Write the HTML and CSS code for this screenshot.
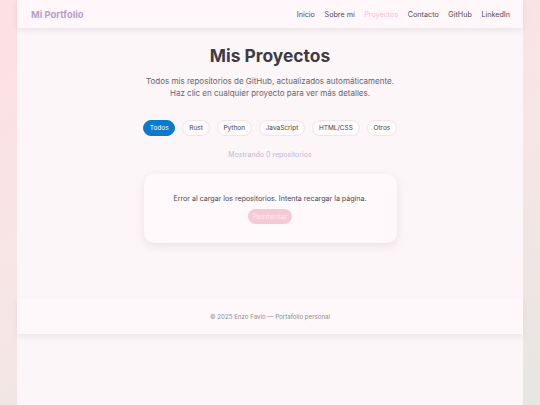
FILE: index.html
```html
<!DOCTYPE html>
<html lang="es">
<head>
<meta charset="utf-8">
<title>Mis Proyectos</title>
<link rel="stylesheet" href="styles.css">
</head>
<body>
<div class="page">
  <header class="topbar">
    <div class="logo">Mi Portfolio</div>
    <nav class="nav">
      <a class="nav-link">Inicio</a>
      <a class="nav-link">Sobre mí</a>
      <a class="nav-link active">Proyectos</a>
      <a class="nav-link">Contacto</a>
      <a class="nav-link">GitHub</a>
      <a class="nav-link">LinkedIn</a>
    </nav>
  </header>
  <main class="main">
    <h1 class="title">Mis Proyectos</h1>
    <p class="subtitle">Todos mis repositorios de GitHub, actualizados automáticamente.<br>Haz clic en cualquier proyecto para ver más detalles.</p>
    <div class="filters">
      <button class="pill selected">Todos</button>
      <button class="pill">Rust</button>
      <button class="pill">Python</button>
      <button class="pill">JavaScript</button>
      <button class="pill">HTML/CSS</button>
      <button class="pill">Otros</button>
    </div>
    <div class="count">Mostrando 0 repositorios</div>
    <div class="card">
      <p class="error">Error al cargar los repositorios. Intenta recargar la página.</p>
      <button class="retry">Reintentar</button>
    </div>
  </main>
  <footer class="footer">© 2025 Enzo Favio — Portafolio personal</footer>
</div>
</body>
</html>
```

FILE: styles.css
```css
* { box-sizing: border-box; }
html, body { height: 100%; }
body {
  margin: 0;
  font-family: "Inter", "Open Sans", sans-serif;
  background: linear-gradient(160deg, #fde0e3 0%, #f6e6e6 55%, #e6e6e2 100%);
  color: #3d3a45;
}
.page {
  width: 506px;
  margin: 0 auto;
  min-height: 100%;
  background: #fcf6f8;
}
.topbar {
  height: 28px;
  background: #fff7fa;
  box-shadow: 0 2px 6px rgba(180, 160, 170, 0.25);
  display: flex;
  align-items: center;
  justify-content: space-between;
  padding: 0 13px 0 14px;
  position: relative;
}
.logo {
  font-size: 9.4px;
  font-weight: 700;
  color: #b89dcb;
}
.nav { display: flex; gap: 9.6px; }
.nav-link {
  font-size: 7.2px;
  color: #4f4b55;
}
.nav-link.active { color: #f5bfd3; }
.main {
  display: flex;
  flex-direction: column;
  align-items: center;
  padding-top: 15px;
  height: 270px;
}
.title {
  margin: 0;
  font-size: 17.4px;
  font-weight: 700;
  line-height: 26px;
  color: #3e3b46;
}
.subtitle {
  margin: 6px 0 0;
  font-size: 8px;
  line-height: 12px;
  color: #68646c;
  text-align: center;
}
.filters {
  display: flex;
  gap: 7px;
  margin-top: 21px;
}
.pill {
  height: 16px;
  padding: 0 5.8px;
  border-radius: 8px;
  border: 1px solid #f0e6ea;
  background: #fffbfc;
  font-family: inherit;
  font-size: 6.5px;
  color: #444;
}
.pill.selected {
  background: #0a7bcc;
  border-color: #0a7bcc;
  color: #fff;
}
.count {
  margin-top: 14px;
  font-size: 7px;
  line-height: 10px;
  color: #c6b7d4;
}
.card {
  margin-top: 14px;
  width: 253px;
  height: 69px;
  background: #fff9fb;
  border-radius: 10px;
  box-shadow: 0 3px 10px rgba(170, 150, 160, 0.22);
  display: flex;
  flex-direction: column;
  align-items: center;
  padding-top: 20px;
}
.error {
  margin: 0;
  font-size: 7.1px;
  line-height: 10px;
  color: #4a4650;
}
.retry {
  margin-top: 5px;
  height: 15px;
  padding: 0 4px;
  border: none;
  border-radius: 8px;
  background: #f7c9d7;
  color: #fde8ef;
  font-family: inherit;
  font-size: 7.3px;
}
.footer {
  height: 36px;
  background: #fff8fa;
  box-shadow: 0 3px 6px rgba(180, 160, 170, 0.2);
  display: flex;
  align-items: center;
  justify-content: center;
  font-size: 6.15px;
  color: #8d8890;
}
```
